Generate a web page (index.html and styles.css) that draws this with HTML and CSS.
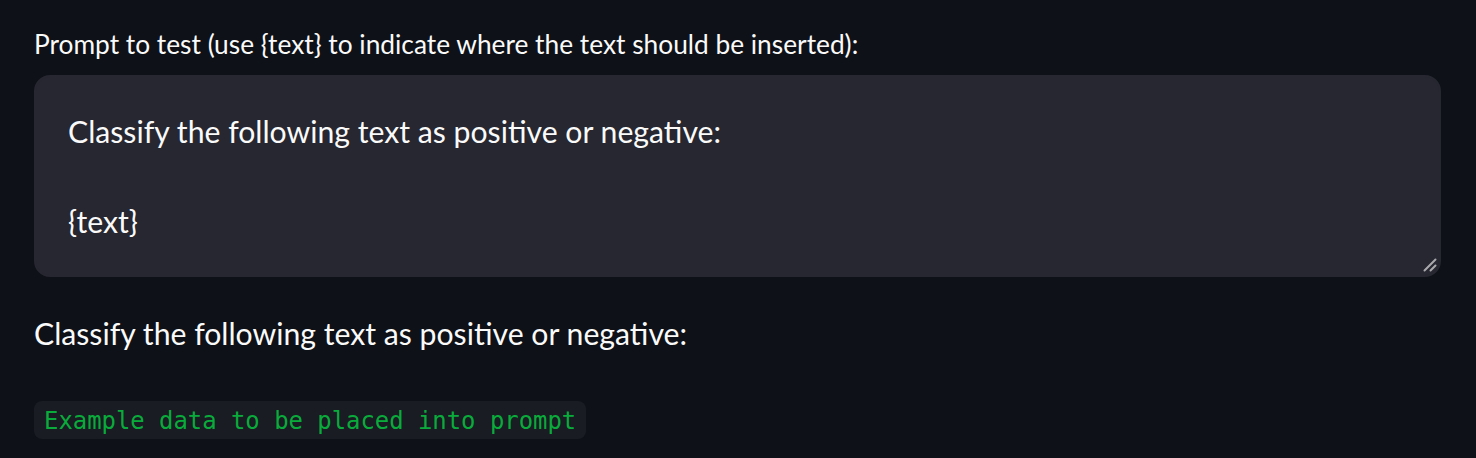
FILE: index.html
```html
<!DOCTYPE html>
<html>
<head>
<meta charset="utf-8">
<link rel="stylesheet" href="styles.css">
</head>
<body>
<main class="main">
  <div class="field">
    <label class="field-label" for="prompt">Prompt to test (use {text} to indicate where the text should be inserted):</label>
    <div class="field-box">
      <textarea id="prompt" class="field-input">Classify the following text as positive or negative:

{text}</textarea>
      <svg class="grip" width="16" height="16" viewBox="0 0 16 16" aria-hidden="true">
        <line x1="2.5" y1="13.5" x2="13.5" y2="2.5" stroke="#a9a9ad" stroke-width="2" stroke-linecap="round"/>
        <line x1="8.5" y1="13.5" x2="13.5" y2="8.5" stroke="#a9a9ad" stroke-width="2" stroke-linecap="round"/>
      </svg>
    </div>
  </div>
  <p class="preview">Classify the following text as positive or negative:</p>
  <div class="code-row"><code class="code">Example data to be placed into prompt</code></div>
</main>
</body>
</html>
```
FILE: styles.css
```css
html, body {
  margin: 0;
  padding: 0;
  background: #0e1117;
  color: #fafafa;
  color-scheme: dark;
  font-family: Lato, "Source Sans Pro", sans-serif;
}
.main {
  padding: 24px 34px 0 34px;
}
.field {
  display: flex;
  flex-direction: column;
}
.field-label {
  font-size: 26.3px;
  line-height: 40px;
  height: 40px;
  margin-bottom: 11px;
}
.field-box {
  position: relative;
  width: 1407px;
  height: 202px;
}
.field-input {
  box-sizing: border-box;
  display: block;
  height: 202px;
  width: 1407px;
  background: #262730;
  color: #fafafa;
  border: 2px solid #262730;
  border-radius: 16px;
  padding: 32px 32px 20px 32px;
  font-family: Lato, sans-serif;
  font-size: 30.2px;
  line-height: 44.8px;
  resize: none;
  outline: none;
  margin: 0;
}
.grip {
  position: absolute;
  right: 3px;
  bottom: 4px;
}
.preview {
  margin: 31px 0 0 0;
  font-size: 30.2px;
  line-height: 51px;
}
.code-row {
  margin-top: 42px;
}
.code {
  display: inline-block;
  background: #1a1c23;
  color: #09ab3b;
  font-family: "DejaVu Sans Mono", monospace;
  font-size: 23.9px;
  line-height: 28px;
  padding: 6px 10px 4px 10px;
  border-radius: 8px;
}
```
